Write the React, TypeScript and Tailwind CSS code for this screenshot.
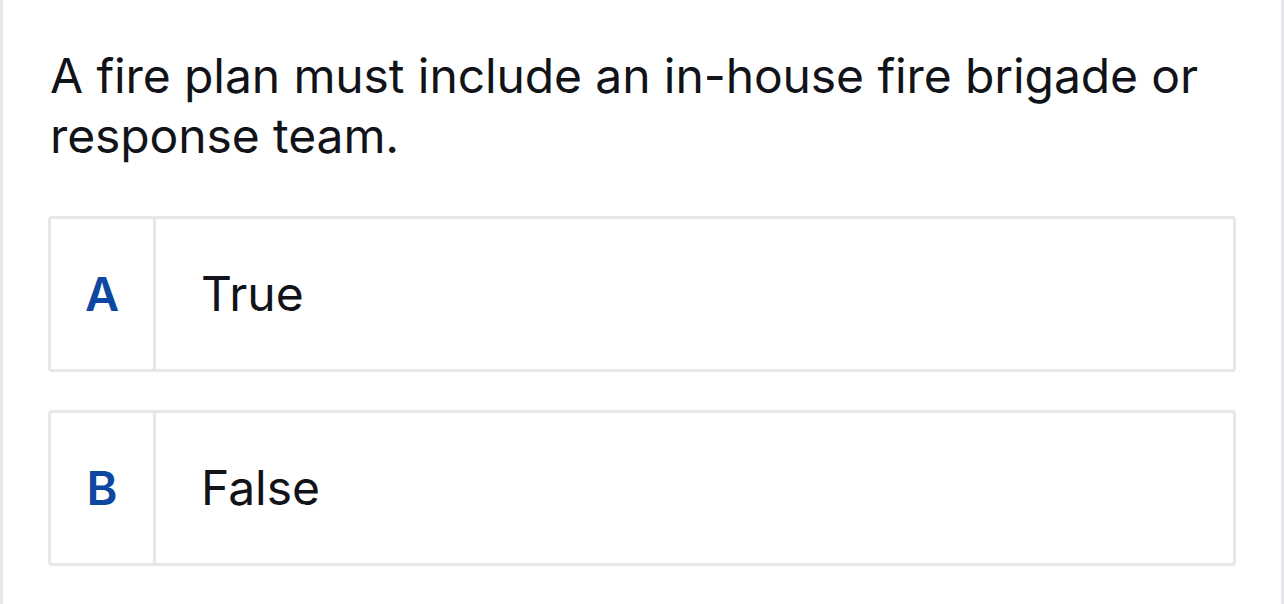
export default function App() {
  const options = [
    { letter: "A", text: "True" },
    { letter: "B", text: "False" },
  ];

  return (
    <div
      className="flex h-[604px] w-full bg-white overflow-hidden"
      style={{ fontFamily: "Inter, 'Liberation Sans', sans-serif" }}
    >
      <div className="w-[3px] shrink-0 bg-[#e6e6eb]" />

      <main className="flex-1 px-[45px] pt-[46px]">
        <h1 className="pl-[2px] text-[48px] leading-[60px] font-normal tracking-[-0.1px] text-[#111318]">
          A fire plan must include an in-house fire brigade or response team.
        </h1>

        <div className="mt-[50px] flex flex-col gap-[38px]">
          {options.map((o) => (
            <div
              key={o.letter}
              className="flex h-[156px] rounded-[4px] border-[3px] border-[#e6e6eb] bg-white"
            >
              <div className="flex w-[105px] shrink-0 items-center justify-center border-r-[3px] border-[#e6e6eb] text-[47px] font-semibold text-[#0d47a1]">
                {o.letter}
              </div>
              <div className="flex items-center pl-[45px] text-[48px] text-[#111318]">
                {o.text}
              </div>
            </div>
          ))}
        </div>
      </main>

      <div className="w-[3px] shrink-0 bg-[#e6e6eb]" />
    </div>
  );
}
